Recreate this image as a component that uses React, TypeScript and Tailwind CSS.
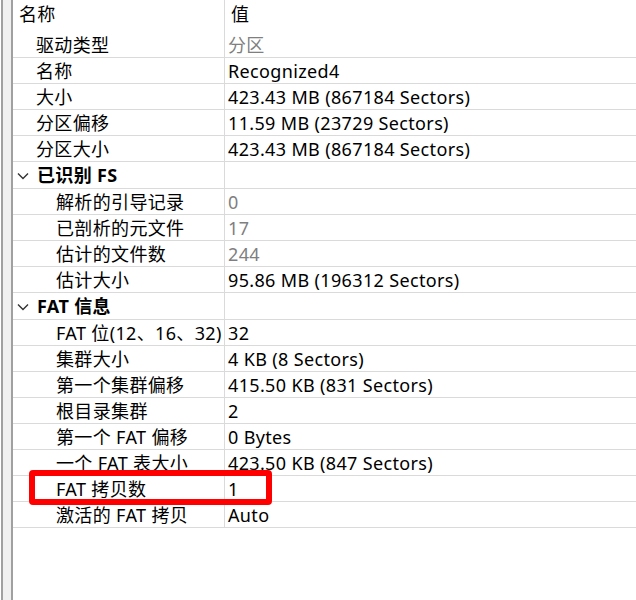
import React from 'react';

type Row =
  | { kind: 'group'; label: string }
  | { kind: 'item'; label: string; value: string; level: 1 | 2; muted?: boolean };

const rows: Row[] = [
  { kind: 'item', label: '驱动类型', value: '分区', level: 1, muted: true },
  { kind: 'item', label: '名称', value: 'Recognized4', level: 1 },
  { kind: 'item', label: '大小', value: '423.43 MB (867184 Sectors)', level: 1 },
  { kind: 'item', label: '分区偏移', value: '11.59 MB (23729 Sectors)', level: 1 },
  { kind: 'item', label: '分区大小', value: '423.43 MB (867184 Sectors)', level: 1 },
  { kind: 'group', label: '已识别 FS' },
  { kind: 'item', label: '解析的引导记录', value: '0', level: 2, muted: true },
  { kind: 'item', label: '已剖析的元文件', value: '17', level: 2, muted: true },
  { kind: 'item', label: '估计的文件数', value: '244', level: 2, muted: true },
  { kind: 'item', label: '估计大小', value: '95.86 MB (196312 Sectors)', level: 2 },
  { kind: 'group', label: 'FAT 信息' },
  { kind: 'item', label: 'FAT 位(12、16、32)', value: '32', level: 2 },
  { kind: 'item', label: '集群大小', value: '4 KB (8 Sectors)', level: 2 },
  { kind: 'item', label: '第一个集群偏移', value: '415.50 KB (831 Sectors)', level: 2 },
  { kind: 'item', label: '根目录集群', value: '2', level: 2 },
  { kind: 'item', label: '第一个 FAT 偏移', value: '0 Bytes', level: 2 },
  { kind: 'item', label: '一个 FAT 表大小', value: '423.50 KB (847 Sectors)', level: 2 },
  { kind: 'item', label: 'FAT 拷贝数', value: '1', level: 2 },
  { kind: 'item', label: '激活的 FAT 拷贝', value: 'Auto', level: 2 },
];

const Chevron = () => (
  <svg width="12" height="8" viewBox="0 0 12 8" className="ml-[4px] mr-[8px] shrink-0">
    <polyline points="1,1.5 6,6.5 11,1.5" fill="none" stroke="#333" strokeWidth="1.4" />
  </svg>
);

export default function App() {
  return (
    <div
      className="relative flex w-[636px] h-[600px] bg-white text-[18px] tracking-[0.35px] text-black overflow-hidden"
      style={{ fontFamily: '"Noto Sans", "Noto Sans CJK SC", sans-serif' }}
    >
      {/* left splitter */}
      <div className="w-px bg-white shrink-0" />
      <div className="w-[2px] bg-[#a0a0a0] shrink-0" />
      <div className="w-[8px] bg-[#f0f0f0] shrink-0" />
      <div className="w-[2px] bg-[#a0a0a0] shrink-0" />

      {/* property grid */}
      <div className="flex-1 flex flex-col">
        <div className="flex h-[32px] shrink-0">
          <div className="w-[212px] flex items-center pl-[6px] pb-[3px] border-r border-[#dadada]">名称</div>
          <div className="flex-1 flex items-center pl-[6px] pb-[3px]">值</div>
        </div>
        {rows.map((r, i) =>
          r.kind === 'group' ? (
            <div key={i} className="flex h-[27px] shrink-0 border-b border-[#dadada]">
              <div className="w-[212px] flex items-center pt-[1px] font-bold border-r border-[#dadada]">
                <Chevron />
                {r.label}
              </div>
              <div className="flex-1" />
            </div>
          ) : (
            <div key={i} className="flex h-[26px] shrink-0 border-b border-[#dadada]">
              <div
                className={`w-[212px] flex items-center pt-[2px] whitespace-nowrap border-r border-[#dadada] ${
                  r.level === 1 ? 'pl-[23px]' : 'pl-[43px]'
                }`}
              >
                {r.label}
              </div>
              <div
                className={`flex-1 flex items-center pt-[2px] pl-[3px] whitespace-nowrap ${
                  r.muted ? 'text-[#7f7f7f]' : ''
                }`}
              >
                {r.value}
              </div>
            </div>
          )
        )}
      </div>

      {/* annotation */}
      <div className="absolute left-[29px] top-[470px] w-[243px] h-[35px] border-[6px] border-[#ff0000] rounded-[4px]" />
    </div>
  );
}
